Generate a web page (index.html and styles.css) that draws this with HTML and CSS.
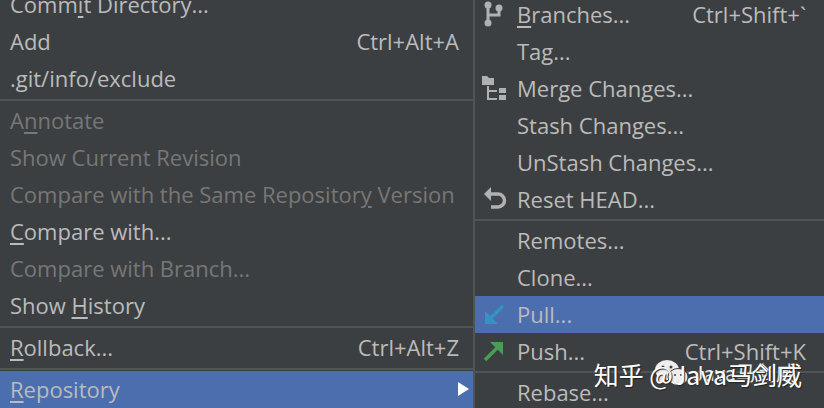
FILE: index.html
```
<!DOCTYPE html>
<html lang="en">
<head>
  <meta charset="UTF-8" />
  <title>Git menu</title>
  <link rel="stylesheet" href="styles.css">
</head>
<body>

<div class="menus">
  <!-- Git menu -->
  <div class="menu main-menu">
    <button class="item"><span>Comm<u>i</u>t Directory...</span></button>
    <button class="item"><span>Add</span><span class="keys">Ctrl+Alt+A</span></button>
    <button class="item"><span>.git/info/exclude</span></button>
    <hr>
    <button class="item" disabled><span>A<u>n</u>notate</span></button>
    <button class="item" disabled><span>Show Current Revision</span></button>
    <button class="item" disabled><span>Compare with the Same Repositor<u>y</u> Version</span></button>
    <button class="item"><span><u>C</u>ompare with...</span></button>
    <button class="item" disabled><span>Compare with Branch...</span></button>
    <button class="item"><span>Show <u>H</u>istory</span></button>
    <hr>
    <button class="item"><span><u>R</u>ollback...</span><span class="keys">Ctrl+Alt+Z</span></button>
    <hr>
    <button class="item selected"><span><u>R</u>epository</span>
      <svg class="arrow" width="11" height="16" viewBox="0 0 11 16"><path d="M0 1l11 7-11 7z" fill="#fff"/></svg>
    </button>
  </div>

  <!-- Repository submenu -->
  <div class="menu sub-menu">
    <button class="item">
      <svg class="icon" viewBox="0 0 26 26"><g fill="none" stroke="#afb1b3" stroke-width="3"><path d="M7 4v18M18 8v6H7"/></g><g fill="#afb1b3"><circle cx="7" cy="4" r="3.500"/><circle cx="7" cy="22" r="3.500"/><circle cx="18" cy="7" r="3.500"/></g></svg>
      <span><u>B</u>ranches...</span><span class="keys">Ctrl+Shift+`</span>
    </button>
    <button class="item"><span class="icon"></span><span>Tag...</span></button>
    <button class="item">
      <svg class="icon" viewBox="0 0 26 26"><g fill="#afb1b3"><path d="M1 1h5l2 2h5v7H1zM18 13h7v5h-7zM18 20h7v5h-7z"/><path d="M6 11h2v4h8v2H8v6h8v2H6z"/></g></svg>
      <span>Merge Changes...</span>
    </button>
    <button class="item"><span class="icon"></span><span>Stash Changes...</span></button>
    <button class="item"><span class="icon"></span><span>UnStash Changes...</span></button>
    <button class="item">
      <svg class="icon" viewBox="0 0 26 26"><path d="M8 8h9a6 6 0 0 1 0 13H10" fill="none" stroke="#afb1b3" stroke-width="3.500"/><path d="M3 8l7-7v14z" fill="#afb1b3"/></svg>
      <span>Reset HEAD...</span>
    </button>
    <hr>
    <button class="item"><span class="icon"></span><span>Remotes...</span></button>
    <button class="item"><span class="icon"></span><span>Clone...</span></button>
    <button class="item selected">
      <svg class="icon" viewBox="0 0 26 26"><path d="M22 5L9 18" stroke="#3592c4" stroke-width="3.500"/><path d="M4 10v13h13z" fill="#3592c4"/></svg>
      <span>Pull...</span>
    </button>
    <button class="item">
      <svg class="icon" viewBox="0 0 26 26"><path d="M4 22L17 9" stroke="#499c54" stroke-width="3.500"/><path d="M9 4h13v13z" fill="#499c54"/></svg>
      <span>Push...</span><span class="keys">Ctrl+Shift+K</span>
    </button>
    <hr>
    <button class="item"><span class="icon"></span><span>Rebase...</span></button>
  </div>
</div>

<div class="watermark account">
  <svg width="34" height="28" viewBox="0 0 34 28"><g fill="#eee"><ellipse cx="12" cy="11" rx="12" ry="10"/><path d="M4 18l-1 6 7-3z"/><ellipse cx="23" cy="18" rx="10" ry="8.500" stroke="#3c3f41"/></g><g fill="#3c3f41"><circle cx="8" cy="8" r="1.500"/><circle cx="16" cy="8" r="1.500"/><circle cx="20" cy="16" r="1"/><circle cx="26" cy="16" r="1"/></g></svg>
  <span>Java马剑威</span>
</div>
<div class="watermark site">知乎 @Java马剑威</div>

</body>
</html>
```
FILE: styles.css
```
* {
  box-sizing: border-box;
}
body {
  margin: 0;
  height: 100vh;
  overflow: hidden;
  position: relative;
  background-color: #3c3f41;
  font-family: "Open Sans", "Noto Sans", "Noto Sans CJK SC", sans-serif;
  font-size: 22px;
  color: #bbbbbb;
}
.menus {
  display: grid;
  grid-template-columns: 475fr 349fr;
}
.menu {
  display: flex;
  flex-direction: column;
}
.main-menu {
  margin-top: -14px;
  border-right: 2px solid #515456;
}
.sub-menu {
  margin-top: -4px;
}
.item {
  display: flex;
  align-items: center;
  flex: none;
  height: 37px;
  padding: 0 14px 2px 10px;
  border: none;
  background: none;
  font: inherit;
  color: inherit;
  white-space: nowrap;
}
.item:disabled {
  color: #777777;
}
.item.selected {
  background-color: #4b6eaf;
}
.sub-menu .item {
  padding: 0 18px 2px 6px;
}
.keys {
  margin-left: auto;
}
.arrow {
  margin-left: auto;
  margin-right: -10px;
}
.icon {
  width: 26px;
  height: 26px;
  margin-right: 10px;
  flex: none;
}
u {
  text-underline-offset: 3px;
}
hr {
  width: 100%;
  height: 5px;
  margin: 0;
  padding: 2px 0 1px;
  border: none;
  background: #515456 content-box;
}
.sub-menu hr {
  height: 4px;
  padding: 1px 0;
}
.watermark {
  position: absolute;
  display: flex;
  align-items: center;
  white-space: nowrap;
  font-family: "Noto Sans CJK SC", sans-serif;
}
.site {
  right: 22px;
  bottom: 16px;
  font-size: 25px;
  color: #fff;
  line-height: 36px;
  text-shadow: 1px 1px 1px #222;
}
.account {
  right: 28px;
  bottom: 20px;
  gap: 4px;
  font-size: 20px;
  line-height: 30px;
  color: #eee;
}
```
